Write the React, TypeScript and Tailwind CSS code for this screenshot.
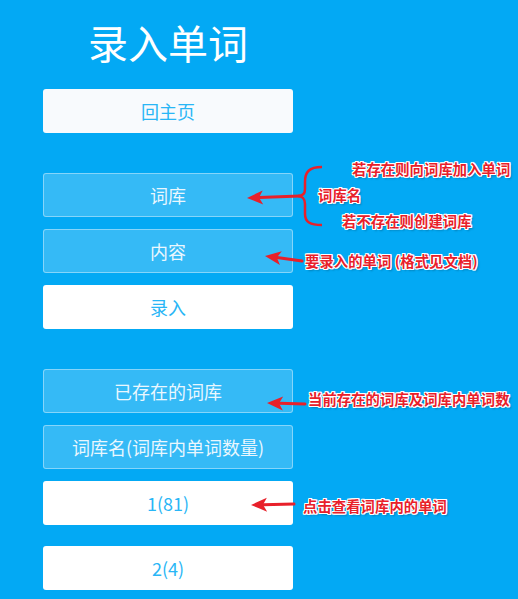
import React from 'react'

const font = { fontFamily: '"Noto Sans CJK SC", "Noto Sans", sans-serif' }

type Pt = [number, number]

// red hand-drawn style arrow from tail to tip
function Arrow({ tail, tip }: { tail: Pt; tip: Pt }) {
  const dx = tail[0] - tip[0]
  const dy = tail[1] - tip[1]
  const len = Math.hypot(dx, dy)
  const ux = dx / len
  const uy = dy / len
  const px = -uy
  const py = ux
  const back = 16
  const wide = 7
  const notch = 12
  const b1: Pt = [tip[0] + ux * back + px * wide, tip[1] + uy * back + py * wide]
  const b2: Pt = [tip[0] + ux * back - px * wide, tip[1] + uy * back - py * wide]
  const n: Pt = [tip[0] + ux * notch, tip[1] + uy * notch]
  return (
    <g>
      <line x1={tail[0]} y1={tail[1]} x2={n[0]} y2={n[1]} stroke="#e8202a" strokeWidth="3" strokeLinecap="round" />
      <polygon points={`${tip[0]},${tip[1]} ${b1[0]},${b1[1]} ${n[0]},${n[1]} ${b2[0]},${b2[1]}`} fill="#e8202a" />
    </g>
  )
}

function Note({ x, y, children }: { x: number; y: number; children: React.ReactNode }) {
  return (
    <div
      className="absolute whitespace-nowrap text-[14.3px] leading-none font-bold tracking-[0.1px] text-[#e8202a] [text-shadow:1px_1px_0_#fff,-1px_-1px_0_#fff,1px_-1px_0_#fff,-1px_1px_0_#fff,0_1px_0_#fff,0_-1px_0_#fff,1px_0_0_#fff,-1px_0_0_#fff,2px_2px_2px_rgba(0,0,0,0.25)]"
      style={{ left: x, top: y }}
    >
      {children}
    </div>
  )
}

function SolidBtn({ children, soft = false }: { children: React.ReactNode; soft?: boolean }) {
  return (
    <div
      className={`h-[44px] flex items-center justify-center rounded-[3px] text-[18px] text-[#29b6f6] ${
        soft ? 'bg-[#f8fafd]' : 'bg-white'
      }`}
    >
      {children}
    </div>
  )
}

function GlassBtn({ children }: { children: React.ReactNode }) {
  return (
    <div className="h-[44px] flex items-center justify-center rounded-[3px] border border-white/40 bg-white/20 text-[18px] text-[#eaf7fe]">
      {children}
    </div>
  )
}

export default function App() {
  return (
    <div className="relative w-[518px] h-[599px] overflow-hidden bg-[#03a9f4]" style={font}>
      <div className="w-[250px] ml-[43px] pt-[18px] flex flex-col">
        {/* Title */}
        <h1 className="h-[48px] text-[40px] leading-[48px] text-white text-center font-normal mb-[23px]">录入单词</h1>

        <SolidBtn soft>回主页</SolidBtn>

        {/* Input section */}
        <div className="mt-[40px] flex flex-col gap-[12px]">
          <GlassBtn>词库</GlassBtn>
          <GlassBtn>内容</GlassBtn>
          <SolidBtn>录入</SolidBtn>
        </div>

        {/* Existing libraries */}
        <div className="mt-[40px] flex flex-col gap-[12px]">
          <GlassBtn>已存在的词库</GlassBtn>
          <GlassBtn>词库名(词库内单词数量)</GlassBtn>
          <SolidBtn>1(81)</SolidBtn>
        </div>
        <div className="mt-[21px]">
          <SolidBtn>2(4)</SolidBtn>
        </div>
      </div>

      {/* Annotations */}
      <svg className="absolute inset-0 pointer-events-none" width="518" height="599">
        <path
          d="M322 167 C309 167 305 172 305 182 L305 189 C305 194 302 196 298 196 C302 196 305 199 305 204 L305 214 C305 222 310 225 322 225"
          fill="none"
          stroke="#e8202a"
          strokeWidth="2.5"
        />
        <Arrow tail={[300, 196]} tip={[247, 198]} />
        <Arrow tail={[302, 261]} tip={[265, 256]} />
        <Arrow tail={[305, 404]} tip={[267, 403]} />
        <Arrow tail={[294, 504]} tip={[251, 505]} />
      </svg>
      <Note x={352} y={162}>若存在则向词库加入单词</Note>
      <Note x={318} y={188}>词库名</Note>
      <Note x={342} y={214}>若不存在则创建词库</Note>
      <Note x={305} y={254}>要录入的单词 (格式见文档)</Note>
      <Note x={308} y={392}>当前存在的词库及词库内单词数</Note>
      <Note x={303} y={499}>点击查看词库内的单词</Note>
    </div>
  )
}
